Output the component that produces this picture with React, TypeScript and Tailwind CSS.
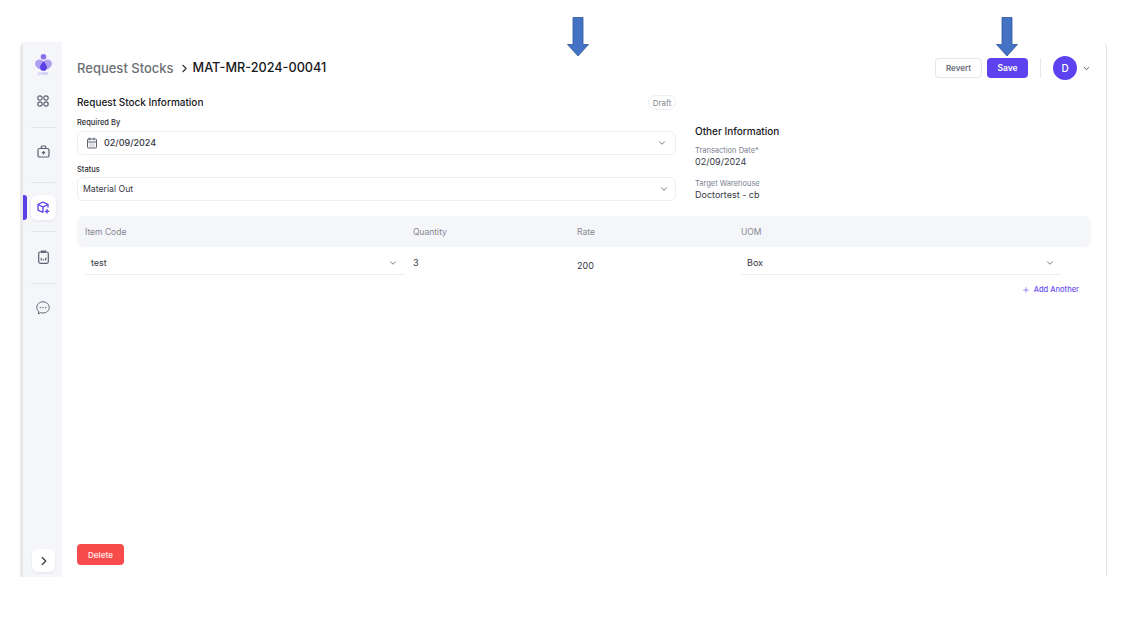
import { ChevronDown, ChevronRight, Plus, CalendarDays } from "lucide-react";

const Divider = () => <div className="h-px w-[24px] bg-[#e4e5ea] shrink-0" />;

const Arrow = ({ className }: { className: string }) => (
  <svg className={className} width="22" height="40" viewBox="0 0 22 40">
    <path d="M6 .5h10v27h5.5L11 39 .5 27.5H6z" fill="#4472c4" stroke="#2f5597" strokeWidth="0.8" />
  </svg>
);

const Sidebar = () => (
  <div className="relative w-[39px] h-full bg-[#f5f6fa] pl-[1px] flex flex-col items-center shrink-0">
    {/* logo */}
    <svg className="mt-[12px] shrink-0" width="17" height="18" viewBox="0 0 17 18">
      <circle cx="8.500" cy="2.800" r="2.800" fill="#8a70ea" />
      <path d="M4.500 5.500c1.800 0 3.200 1 4 2.400.8-1.400 2.200-2.400 4-2.400 2.400 0 4.500 1.700 4.500 4.200 0 2.300-2.200 4-4 5.300H4c-1.800-1.300-4-3-4-5.300 0-2.500 2.100-4.200 4.500-4.200z" fill="#b09ff2" />
      <path d="M8.500 7c1.700 2.400 3.400 4 3.400 6.400a3.400 3.400 0 0 1-6.800 0C5.100 11 6.800 9.400 8.500 7z" fill="#5d3fe8" />
    </svg>
    <span className="h-[4px] text-[4px] leading-[4px] text-[#a598ee] shrink-0">CARE</span>

    {/* dashboard */}
    <svg className="mt-[19px] shrink-0" width="12" height="12" viewBox="0 0 12 12" fill="none" stroke="#5c6270" strokeWidth="1.200">
      <circle cx="3" cy="3" r="2.200" />
      <circle cx="9" cy="3" r="2.200" />
      <circle cx="3" cy="9" r="2.200" />
      <circle cx="9" cy="9" r="2.200" />
    </svg>
    <div className="mt-[20px]"><Divider /></div>

    {/* medical bag */}
    <svg className="mt-[17px] shrink-0" width="13" height="13" viewBox="0 0 13 13" fill="none" stroke="#5c6270" strokeWidth="1.200">
      <rect x="1" y="3.500" width="11" height="8.500" rx="1.600" />
      <path d="M4.300 3.500V2a1 1 0 0 1 1-1h2.400a1 1 0 0 1 1 1v1.500M6.500 6v3.500M4.800 7.700h3.400" />
    </svg>
    <div className="mt-[24px]"><Divider /></div>

    {/* active stock item */}
    <div className="mt-[12px] w-[25px] h-[25px] bg-white rounded-[6px] shadow-[0_1px_3px_rgba(30,30,60,0.08)] flex items-center justify-center shrink-0">
      <svg width="13" height="13" viewBox="0 0 13 13" fill="none" stroke="#5d3fe8" strokeWidth="1.300">
        <path d="M6 1 1 3.500v5.500L6 11.500M6 1l5 2.500V6.500M1 3.500 6 6l5-2.500M6 6v5.500M10 8v4.500M7.800 10.300h4.500" />
      </svg>
    </div>
    <div className="absolute left-0 top-[153px] w-[4px] h-[25px] rounded-r-[3px] bg-[#5d3fe8]" />
    <div className="mt-[11px]"><Divider /></div>

    {/* reports */}
    <svg className="mt-[18px] shrink-0" width="11" height="14" viewBox="0 0 11 14" fill="none" stroke="#5c6270" strokeWidth="1.200">
      <rect x=".7" y="2" width="9.600" height="11.300" rx="1.500" />
      <path d="M3.500 2.500V1.200h4v1.300zM3.300 10.500V8M5.500 10.500V9M7.700 10.500V7.500" />
    </svg>
    <div className="mt-[19px]"><Divider /></div>

    {/* chat */}
    <svg className="mt-[17px] shrink-0" width="14" height="14" viewBox="0 0 14 14" fill="none" stroke="#5c6270" strokeWidth="1">
      <path d="M7 .8c3.500 0 6.200 2.500 6.200 5.700S10.500 12 7 12c-.9 0-1.700-.1-2.400-.4L2.300 13l.4-2.700C1.500 9.300.8 8 .8 6.500.8 3.300 3.500.8 7 .8z" />
      <circle cx="4.300" cy="6.500" r=".7" fill="#5c6270" stroke="none" />
      <circle cx="7" cy="6.500" r=".7" fill="#5c6270" stroke="none" />
      <circle cx="9.700" cy="6.500" r=".7" fill="#5c6270" stroke="none" />
    </svg>

    <button className="mt-auto mb-[5px] ml-[1px] w-[23px] h-[23px] bg-white rounded-[6px] shadow-[0_1px_3px_rgba(30,30,60,0.08)] flex items-center justify-center shrink-0">
      <ChevronRight size={14} strokeWidth={2.2} color="#3a3d46" />
    </button>
  </div>
);

const SelectBox = ({ children, chevronClass }: { children: React.ReactNode; chevronClass: string }) => (
  <div className="h-[24px] border border-[#eceef2] rounded-[6px] flex items-center text-[#34373f]">
    {children}
    <ChevronDown size={10} className={`ml-auto ${chevronClass}`} color="#5c6270" />
  </div>
);

export default function App() {
  return (
    <div className="relative w-[1125px] h-[631px] bg-white pt-[42px] pl-[20px] font-['Inter',sans-serif] overflow-hidden">
      <Arrow className="absolute left-[567px] top-[17px]" />
      <Arrow className="absolute left-[996px] top-[17px]" />

      <div className="w-[1087px] h-[535px] flex border-l-[3px] border-r border-l-[#e9e9ec] border-r-[#e4e4e8] rounded-t-[6px]">
        <Sidebar />

        <div className="flex-1 pl-[15px] pr-[15px] flex flex-col h-full">
          {/* header */}
          <div className="h-[52px] flex items-center shrink-0">
            <span className="text-[13px] font-medium text-[#6d6f75] leading-none">Request Stocks</span>
            <ChevronRight size={13} strokeWidth={2} color="#2e3036" className="ml-[4px] mr-[1px]" />
            <span className="ml-[1px] text-[12.700px] font-medium text-[#17181c] leading-none">MAT-MR-2024-00041</span>
            <button className="ml-auto w-[47px] h-[20px] border border-[#e6e7eb] rounded-[4px] text-[8px] font-semibold text-[#6a6e78]">Revert</button>
            <button className="ml-[5px] w-[41px] h-[20px] rounded-[4px] bg-[#5d43ef] text-[8.500px] font-semibold text-white">Save</button>
            <div className="ml-[12px] w-px h-[20px] bg-[#e9e9ec]" />
            <div className="ml-[12px] w-[24px] h-[24px] rounded-full bg-[#5d43ef] text-white text-[10px] font-medium flex items-center justify-center">D</div>
            <ChevronDown size={9} strokeWidth={2.4} color="#4b4f59" className="ml-[5px]" />
          </div>

          {/* form */}
          <div className="flex shrink-0">
            <div className="w-[599px]">
              <div className="h-[15px] mt-[1px] flex items-center justify-between">
                <span className="text-[10px] font-medium text-[#17181c]">Request Stock Information</span>
                <span className="w-[28px] h-[15px] border border-[#eceef2] rounded-full text-[8px] text-[#85878e] flex items-center justify-center">Draft</span>
              </div>
              <div className="mt-[8px] h-[10px] leading-[10px] text-[7.500px] font-medium text-[#2e3036]">Required By</div>
              <div className="mt-[3px]">
                <SelectBox chevronClass="mr-[8px]">
                  <CalendarDays size={12} color="#5c6270" className="ml-[8px]" />
                  <span className="ml-[6px] text-[9px] font-medium">02/09/2024</span>
                </SelectBox>
              </div>
              <div className="mt-[10px] h-[10px] leading-[10px] text-[7.500px] font-medium text-[#2e3036]">Status</div>
              <div className="mt-[2px]">
                <SelectBox chevronClass="mr-[6px]">
                  <span className="ml-[5px] pt-[1px] text-[8.700px]">Material Out</span>
                </SelectBox>
              </div>
            </div>

            <div className="ml-[19px] pt-[31px]">
              <div className="text-[10px] leading-[12px] font-medium text-[#17181c]">Other Information</div>
              <div className="mt-[9px] text-[7.500px] leading-[9px] text-[#7a7f90]">Transaction Date*</div>
              <div className="mt-[1px] text-[9px] leading-[12px] text-[#34373f]">02/09/2024</div>
              <div className="mt-[11px] text-[7.500px] leading-[9px] text-[#7a7f90]">Target Warehouse</div>
              <div className="mt-[1px] text-[9px] leading-[12px] text-[#34373f]">Doctortest - cb</div>
            </div>
          </div>

          {/* table */}
          <div className="mt-[15px] h-[31px] pt-[1px] rounded-[7px] bg-[#f5f6fa] grid grid-cols-[328px_164px_164px_1fr] pl-[8px] items-center text-[8.500px] text-[#85878e] shrink-0">
            <span>Item Code</span>
            <span>Quantity</span>
            <span>Rate</span>
            <span>UOM</span>
          </div>
          <div className="grid grid-cols-[328px_164px_164px_1fr] pl-[8px] text-[9px] text-[#34373f] shrink-0">
            <div className="h-[28px] w-[320px] border-b border-[#eceef2] pt-[4px] flex items-center justify-between pl-[6px] pr-[7px]">
              <span>test</span>
              <ChevronDown size={10} color="#5c6270" />
            </div>
            <div className="h-[28px] pt-[4px] flex items-center">3</div>
            <div className="h-[28px] pt-[10px] flex items-center">200</div>
            <div className="h-[28px] w-[320px] border-b border-[#eceef2] pt-[4px] flex items-center justify-between pl-[6px] pr-[6px]">
              <span>Box</span>
              <ChevronDown size={10} color="#5c6270" />
            </div>
          </div>
          <div className="mt-[9px] flex items-center justify-end pr-[12px] text-[7.500px] font-medium text-[#6b52f2] shrink-0">
            <Plus size={8} strokeWidth={2} />
            <span className="ml-[4px]">Add Another</span>
          </div>

          <button className="mt-auto mb-[12px] w-[47px] h-[21px] rounded-[4px] bg-[#f84b4b] text-[8px] font-semibold text-[#ffe3e3] shrink-0">Delete</button>
        </div>
      </div>
    </div>
  );
}
